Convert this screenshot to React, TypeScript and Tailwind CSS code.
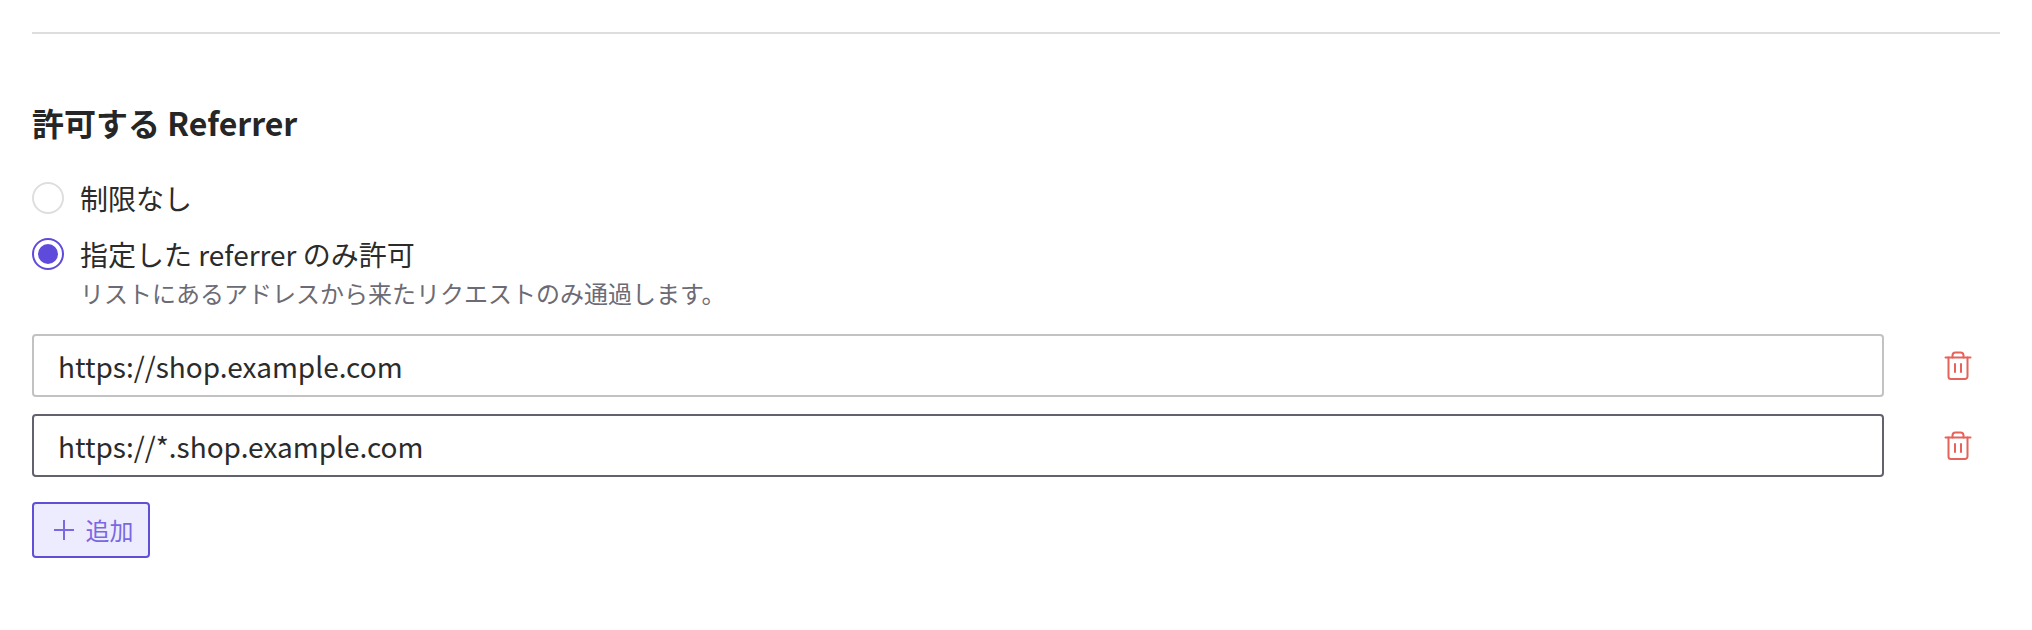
import React from "react";

const font = "font-['Noto_Sans_CJK_JP','Noto_Sans',sans-serif]";

function Trash() {
  return (
    <svg width="28" height="30" viewBox="0 0 28 30" fill="none" stroke="#e5635b" strokeWidth="2" strokeLinecap="round" strokeLinejoin="round">
      <path d="M1.5 6.5H26.5" />
      <path d="M4.5 6.5V25.5a2.5 2.5 0 0 0 2.5 2.5H21a2.5 2.5 0 0 0 2.5-2.5V6.5" />
      <path d="M8.5 6.5V4.5A3 3 0 0 1 11.5 1.5h5a3 3 0 0 1 3 3v2" />
      <path d="M11 13V21" />
      <path d="M17 13V21" />
    </svg>
  );
}

function Row({ value, focused }: { value: string; focused?: boolean }) {
  return (
    <div className="flex items-center">
      <div
        className={`w-[1852px] h-[63px] rounded-[4px] border-2 bg-white pl-[24px] flex items-center text-[28px] text-[#2b2b2b] ${focused ? "border-[#62626f]" : "border-[#c2c2c2]"}`}
      >
        {value}
      </div>
      <div className="ml-[60px] w-[28px] flex justify-center">
        <Trash />
      </div>
    </div>
  );
}

export default function App() {
  return (
    <div className={`${font} bg-white w-[2032px] h-[630px] px-8 pt-[32px] overflow-hidden`}>
      <div className="h-[2px] w-[1968px] bg-[#dddddd]" />
      <h2 className="mt-[67px] text-[32px] leading-[42px] font-bold text-[#262626]">許可する Referrer</h2>
      <div className="mt-[37px] flex items-center gap-4 h-[36px]">
        <span className="w-8 h-8 rounded-full border-2 border-[#dedede] bg-white" />
        <span className="text-[28px] text-[#2b2b2b]">制限なし</span>
      </div>
      <div className="mt-[20px] flex items-center gap-4 h-[36px]">
        <span className="w-8 h-8 rounded-full border-2 border-[#5f4bdb] bg-white flex items-center justify-center">
          <span className="w-5 h-5 rounded-full bg-[#5f4bdb]" />
        </span>
        <span className="text-[28px] text-[#2b2b2b]">指定した referrer のみ許可</span>
      </div>
      <p className="ml-12 mt-1 text-[24px] leading-[34px] text-[#6b6b75]">リストにあるアドレスから来たリクエストのみ通過します。</p>
      <div className="mt-[24px] flex flex-col gap-[17px]">
        <Row value="https://shop.example.com" />
        <Row value="https://*.shop.example.com" focused />
      </div>
      <button className="mt-[25px] w-[118px] h-[56px] rounded-[4px] border-2 border-[#5f4fd6] bg-[#edecfe] flex items-center justify-center gap-[12px] pl-[5px] text-[24px] text-[#7a68e3]">
        <svg width="20" height="20" viewBox="0 0 20 20" fill="none" stroke="#7a68e3" strokeWidth="2"><path d="M10 0V20M0 10H20" /></svg>
        <span>追加</span>
      </button>
    </div>
  );
}
